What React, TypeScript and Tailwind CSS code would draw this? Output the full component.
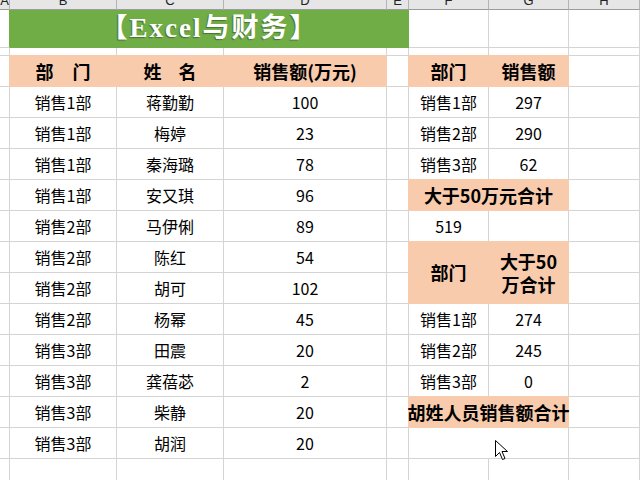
import type { ReactNode } from 'react'
import clsx from 'clsx'

const GR = 'border-r-[#d4d4d4]'
const GB = 'border-b-[#d4d4d4]'
const PR = 'border-r-[#f8cbad]'
const PB = 'border-b-[#f8cbad]'

type CellProps = {
  children?: ReactNode
  r?: string
  b?: string
  className?: string
}

function Cell({ children, r = GR, b = GB, className }: CellProps) {
  return (
    <div className={clsx('flex items-center justify-center border-r border-b text-[16px] text-black whitespace-nowrap', r, b, className)}>
      {children}
    </div>
  )
}

// peach filled header cell
function Head({ children, className }: { children?: ReactNode; className?: string }) {
  return (
    <Cell r={PR} b={PB} className={clsx('bg-[#f8cbad] font-bold text-[18px]', className)}>
      {children}
    </Cell>
  )
}

const left = [
  ['销售1部', '蒋勤勤', '100'],
  ['销售1部', '梅婷', '23'],
  ['销售1部', '秦海璐', '78'],
  ['销售1部', '安又琪', '96'],
  ['销售2部', '马伊俐', '89'],
  ['销售2部', '陈红', '54'],
  ['销售2部', '胡可', '102'],
  ['销售2部', '杨幂', '45'],
  ['销售3部', '田震', '20'],
  ['销售3部', '龚蓓苾', '2'],
  ['销售3部', '柴静', '20'],
  ['销售3部', '胡润', '20'],
]

function Cursor() {
  return (
    <svg className="absolute left-[495px] top-[440px]" width="13" height="21" viewBox="0 0 13 21">
      <path
        d="M0.5 0.5 L0.5 16.5 L4.5 12.5 L7.5 19.5 L10 18.5 L7 11.5 L12.5 11.5 Z"
        fill="#fff"
        stroke="#000"
        strokeWidth="1"
        strokeLinejoin="miter"
      />
    </svg>
  )
}

// right-hand tables, keyed by data row index (0 = first row under the headers)
function rightCells(i: number): ReactNode {
  switch (i) {
    case 0:
      return (
        <>
          <Cell>销售1部</Cell>
          <Cell>297</Cell>
        </>
      )
    case 1:
      return (
        <>
          <Cell>销售2部</Cell>
          <Cell>290</Cell>
        </>
      )
    case 2:
      return (
        <>
          <Cell b={PB}>销售3部</Cell>
          <Cell b={PB}>62</Cell>
        </>
      )
    case 3:
      return <Head className="col-span-2">大于50万元合计</Head>
    case 4:
      return (
        <>
          <Cell b={PB}>519</Cell>
          <Cell b={PB} />
        </>
      )
    case 5:
      return (
        <>
          <Head className="row-span-2">部门</Head>
          <Head className="row-span-2 flex-col">
            <span className="leading-[23px]">大于50</span>
            <span className="leading-[23px]">万合计</span>
          </Head>
        </>
      )
    case 6:
      return null
    case 7:
      return (
        <>
          <Cell>销售1部</Cell>
          <Cell>274</Cell>
        </>
      )
    case 8:
      return (
        <>
          <Cell>销售2部</Cell>
          <Cell>245</Cell>
        </>
      )
    case 9:
      return (
        <>
          <Cell b={PB}>销售3部</Cell>
          <Cell b={PB}>0</Cell>
        </>
      )
    case 10:
      return <Head className="col-span-2 text-[17.5px]">胡姓人员销售额合计</Head>
    case 11:
      return <Cell className="col-span-2" />
    default:
      return (
        <>
          <Cell />
          <Cell />
        </>
      )
  }
}

const peachE = [3, 5, 6, 10]

export default function App() {
  const rows = [...left, ['', '', '']]

  return (
    <div className="relative w-[640px] h-[480px] overflow-hidden bg-white font-['Noto_Sans_CJK_SC',sans-serif]">
      <div className="grid grid-cols-[10px_107px_107px_163px_22px_80px_80px_1fr] grid-rows-[10px_38px_8px_repeat(14,31px)]">
        {/* column letters */}
        {['A', 'B', 'C', 'D', 'E', 'F', 'G', 'H'].map((l) => (
          <div
            key={l}
            className="flex items-end justify-center overflow-hidden pb-[2px] bg-[#e6e6e6] border-r border-b border-r-[#b4b4b4] border-b-[#9b9b9b] font-['Liberation_Sans',sans-serif] text-[13px] leading-none text-[#222]"
          >
            {l}
          </div>
        ))}

        {/* title */}
        <Cell r="border-r-[#70ad47]" />
        <div className="col-span-4 flex items-center justify-center bg-[#70ad47] border-b border-b-[#70ad47]">
          <span className="font-['Liberation_Serif','Noto_Sans_CJK_SC',serif] font-bold text-[27px] leading-none text-white tracking-[2px] [text-shadow:-1px_1px_1px_rgba(0,0,0,0.35)]">
            【Excel与财务】
          </span>
        </div>
        <Cell />
        <Cell />
        <Cell />

        {/* spacer row */}
        <Cell />
        <Cell b={PB} />
        <Cell b={PB} />
        <Cell b={PB} />
        <Cell />
        <Cell b={PB} />
        <Cell b={PB} />
        <Cell />

        {/* headers */}
        <Cell r={PR} />
        <Head>
          <span className="flex gap-[19px]">
            <span>部</span>
            <span>门</span>
          </span>
        </Head>
        <Head>
          <span className="flex gap-[17px]">
            <span>姓</span>
            <span>名</span>
          </span>
        </Head>
        <Head>销售额(万元)</Head>
        <Cell r={PR} />
        <Head>部门</Head>
        <Head>销售额</Head>
        <Cell />

        {/* data rows */}
        {rows.map((row, i) => (
          <div key={i} className="contents">
            <Cell />
            <Cell>{row[0]}</Cell>
            <Cell>{row[1]}</Cell>
            <Cell>{row[2]}</Cell>
            <Cell r={peachE.includes(i) ? PR : GR} />
            {rightCells(i)}
            <Cell />
          </div>
        ))}
      </div>
      <Cursor />
    </div>
  )
}
